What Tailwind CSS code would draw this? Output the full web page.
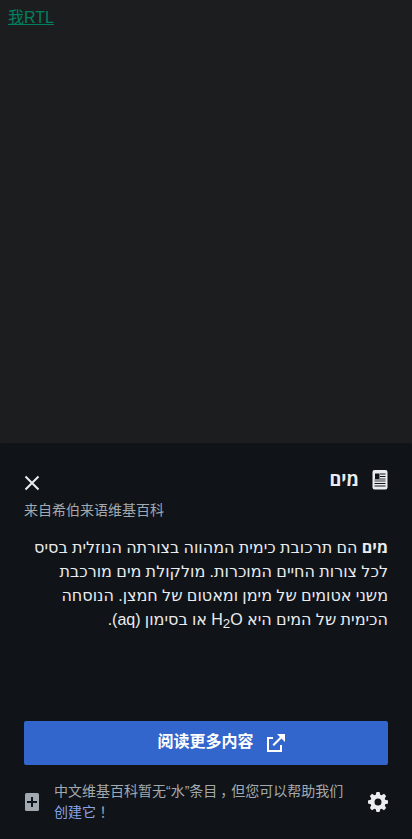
<!DOCTYPE html>
<html lang="zh">
<head>
<meta charset="utf-8">
<title>维基预览</title>
<script src="https://cdn.jsdelivr.net/npm/@tailwindcss/browser@4"></script>
</head>
<body class="h-[839px] overflow-hidden flex flex-col bg-[#1c1d1e] font-['Liberation_Sans','Noto_Sans_CJK_SC',sans-serif]">
<main class="h-[443px] shrink-0 px-2 pt-2 text-base leading-5"><a href="#" class="text-[#008060] underline">我RTL</a></main>
<section class="h-[396px] shrink-0 rounded-t-[2px] bg-[#101418] px-6 flex flex-col text-[#eaecf0]">
  <header class="flex justify-between h-[55px] pt-[26px]">
    <button class="w-4 h-4 mt-[6px]" aria-label="关闭">
      <svg class="block" width="16" height="16" viewBox="0 0 16 16" fill="none" stroke="#eaecf0" stroke-width="2"><path d="M1.500 1.500l13 13M14.500 1.500l-13 13"/></svg>
    </button>
    <div dir="rtl" class="flex gap-[13px]">
      <svg class="block mt-[1px]" width="16" height="20" viewBox="0 0 16 20"><rect width="15" height="19.500" x="0.500" rx="2" fill="#eaecf0"/><path d="M3 3.500h4.500V9H3zM8 3.500h5.500v1H8zM8 6h5.500v1H8zM2.500 13H13.500v1H2.500zM2.500 15.500H13.500v1H2.500z" fill="#101418"/><path d="M8 8h5.500v4H2.500V9H8z" fill="#8d9095"/></svg>
      <h1 class="font-['Open_Sans',sans-serif] text-lg leading-5 font-bold">מים</h1>
    </div>
  </header>
  <p class="text-sm leading-6 text-[#a2a9b1]">来自希伯来语维基百科</p>
  <article dir="rtl" lang="he" class="mt-[14px] h-[185px] font-['DejaVu_Sans',sans-serif] text-base leading-6 [word-spacing:-0.8px]"><b class="font-['Open_Sans',sans-serif] leading-none">מים</b> הם תרכובת כימית המהווה בצורתה הנוזלית בסיס לכל צורות החיים המוכרות<span class="font-['Liberation_Sans',sans-serif]">.</span> מולקולת מים מורכבת משני אטומים של מימן ומאטום של חמצן<span class="font-['Liberation_Sans',sans-serif]">.</span> הנוסחה הכימית של המים היא <span dir="ltr" class="font-['Liberation_Sans',sans-serif]">H<sub class="text-[13.333px]">2</sub>O</span> או בסימון <span class="font-['Liberation_Sans',sans-serif]">(aq).</span></article>
  <a href="#" dir="rtl" class="h-11 shrink-0 rounded-[2px] bg-[#3366cc] text-white font-bold text-base flex items-center justify-center gap-3 pl-[31px]">
    <svg class="block" width="20" height="20" viewBox="0 0 20 20" fill="#fff"><path d="M14 12v5H3V6h4V4H1v15h15v-7z"/><path d="M19 1h-8l3 3-7.500 7.500 1.500 1.500L15.500 5.500 19 9z"/></svg>
    <span class="pb-0.5">阅读更多内容</span>
  </a>
  <footer class="mt-4 flex items-center text-sm leading-[21px] text-[#a2a9b1]">
    <svg class="block" width="16" height="18" viewBox="0 0 16 18"><rect x="1" width="14" height="18" rx="1.500" fill="#a2a9b1"/><path d="M3 8h4V4h2v4h4v2H9v4H7v-4H3z" fill="#101418"/></svg>
    <p class="ml-[14px] w-[300px]">中文维基百科暂无“水”条目<span class="ml-[3px] -mr-[3px]">，</span>但您可以帮助我们<a href="#" class="text-[#88a3e8]">创建它</a><span lang="zh-TW" class="font-['Noto_Sans_CJK_TC',sans-serif] leading-none">！</span></p>
    <svg class="block ml-auto" width="20" height="20" viewBox="0 0 20 20" fill="#eaecf0"><g transform="translate(10 10)"><path id="a" d="M1.500-10h-3l-1 3.500h5zm0 20h-3l-1-3.500h5z"/><use href="#a" transform="rotate(45)"/><use href="#a" transform="rotate(90)"/><use href="#a" transform="rotate(135)"/></g><path d="M10 2.500a7.500 7.500 0 100 15 7.500 7.500 0 000-15m0 4a3.500 3.500 0 110 7 3.500 3.500 0 010-7" fill-rule="evenodd"/></svg>
  </footer>
</section>
</body>
</html>
